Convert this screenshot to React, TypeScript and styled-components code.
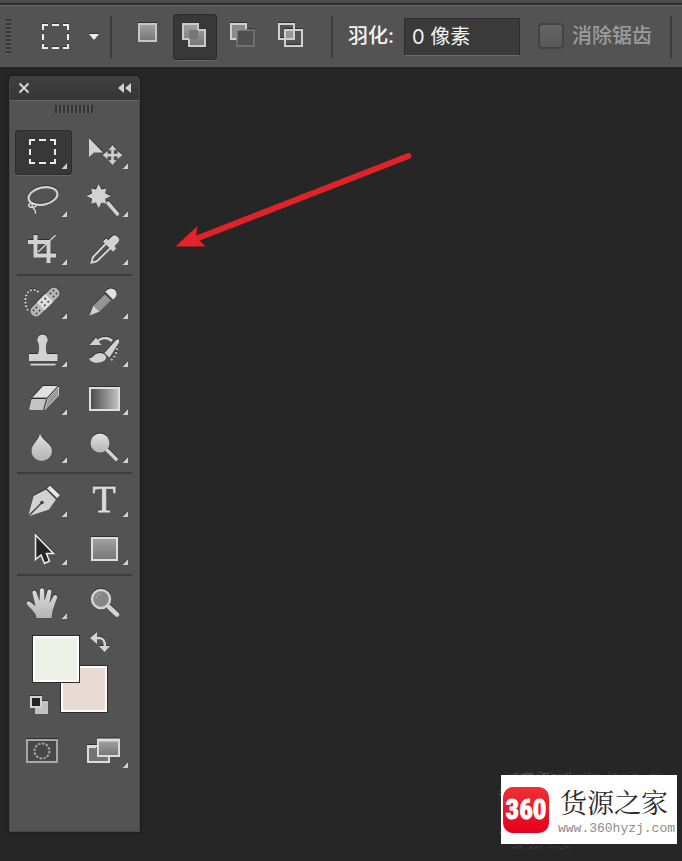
import React, { useState } from "react";
import styled, { createGlobalStyle, css } from "styled-components";

const GlobalStyle = createGlobalStyle`
  *, *::before, *::after { box-sizing: border-box; }
  body {
    margin: 0;
    background: #262626;
    color: #f0f0f0;
    font-family: Inter, "Noto Sans CJK SC", sans-serif;
  }
  button { border: 0; padding: 0; margin: 0; background: none; color: inherit; font: inherit; cursor: pointer; }
`;

const Page = styled.div`
  min-height: 100vh;
  display: flex;
  flex-direction: column;
  background: #262626;
  overflow: hidden;
`;

const TopEdge = styled.div`
  height: 5px;
  background: #4b4b4b;
  border-bottom: 2px solid #2d2d2d;
`;

const OptionsBar = styled.header`
  display: flex;
  align-items: center;
  height: 62px;
  padding-left: 6px;
  background: #535353;
  border-top: 1px solid #686868;
`;

const BarGrip = styled.div`
  width: 5px;
  height: 36px;
  background: repeating-linear-gradient(#363636 0 2px, #5a5a5a 2px 4px);
`;

const PresetButton = styled.button`
  display: flex;
  align-items: center;
  gap: 18px;
  height: 46px;
  margin-left: 30px;
  filter: drop-shadow(0 -1px 0 #333);
`;

const BarDivider = styled.div<{ $before: number; $after: number }>`
  flex: none;
  width: 2px;
  height: 42px;
  margin: 0 ${(p) => p.$after}px 0 ${(p) => p.$before}px;
  background: #3b3b3b;
`;

const pressed = css`
  background: #383838;
  box-shadow: inset 0 0 0 1px #2c2c2c, 0 1px 0 #666;
`;

const Modes = styled.div`
  display: flex;
  gap: 4px;
`;

const ModeButton = styled.button<{ $on: boolean }>`
  display: grid;
  place-items: center;
  width: 44px;
  height: 46px;
  border-radius: 4px;
  ${(p) => p.$on && pressed}
  svg { filter: drop-shadow(0 -1px 0 #303030); }
`;

const FieldLabel = styled.label`
  flex: none;
  margin-right: 10px;
  padding-bottom: 2px;
  font-size: 20px;
  font-weight: 500;
  line-height: 28px;
  color: #f4f4f4;
`;

const FeatherInput = styled.input`
  width: 116px;
  height: 38px;
  padding: 0 8px 2px 7px;
  border: 1px solid #2c2c2c;
  border-bottom-color: #6a6a6a;
  border-radius: 0;
  outline: 0;
  background: #3a3a3a;
  color: #f2f2f2;
  font: 20px Inter, "Noto Sans CJK SC", sans-serif;
`;

const CheckLabel = styled.label`
  display: flex;
  flex: none;
  align-items: center;
  gap: 8px;
  margin-left: 18px;
  padding-bottom: 2px;
  font-size: 20px;
  font-weight: 500;
  line-height: 28px;
  color: #9c9c9c;
`;

const CheckBox = styled.input`
  appearance: none;
  width: 26px;
  height: 26px;
  margin: 0;
  border: 2px solid #434343;
  border-radius: 4px;
  background: linear-gradient(#646464, #585858);
`;

const Workspace = styled.main`
  position: relative;
  flex: 1;
  display: flex;
  align-items: flex-start;
  padding: 9px;
`;

const ToolPanel = styled.aside`
  flex: none;
  width: 131px;
  padding-bottom: 56px;
  border: 1px solid #464646;
  border-top: 0;
  border-radius: 5px 5px 0 0;
  background: #535353;
  box-shadow: 0 0 3px 1px #1e1e1e;
`;

const PanelHeader = styled.div`
  display: flex;
  align-items: center;
  justify-content: space-between;
  height: 25px;
  padding: 0 7px 0 8px;
  border-bottom: 1px solid #656565;
  border-radius: 5px 5px 0 0;
  background: linear-gradient(#3f3f3f, #363636);
  button { display: grid; }
`;

const PanelGrip = styled.div`
  width: 38px;
  height: 8px;
  margin: 4px auto 15px 45px;
  background: repeating-linear-gradient(90deg, #333 0 2px, #5a5a5a 2px 4px);
`;

const ToolGrid = styled.div`
  display: grid;
  grid-template-columns: repeat(2, 61px);
  grid-auto-rows: 48px;
  padding-left: 3px;
  place-items: center;
`;

const ToolButton = styled.button<{ $on: boolean }>`
  display: grid;
  place-items: center;
  width: 57px;
  height: 45px;
  border-radius: 4px;
  ${(p) => p.$on && pressed}
  svg { filter: drop-shadow(0 -1px 0 #2e2e2e); }
`;

const PanelDivider = styled.hr`
  height: 2px;
  margin: 2px 7px;
  border: 0;
  background: #3d3d3d;
`;

const Swatches = styled.div`
  position: relative;
  height: 101px;
`;

const Swatch = styled.button<{ $x: number; $y: number; $fill: string }>`
  position: absolute;
  left: ${(p) => p.$x}px;
  top: ${(p) => p.$y}px;
  width: 48px;
  height: 48px;
  border: 1px solid #2c2c2c;
  background: ${(p) => p.$fill};
  box-shadow: inset 0 0 0 2px #fcfcfa;
`;

const SwatchAction = styled.button<{ $x: number; $y: number }>`
  position: absolute;
  left: ${(p) => p.$x}px;
  top: ${(p) => p.$y}px;
  display: grid;
  filter: drop-shadow(0 -1px 0 #333);
`;

const Pointer = styled.svg`
  position: absolute;
  left: 170px;
  top: 78px;
`;

const Brand = styled.div`
  position: absolute;
  right: 5px;
  bottom: 17px;
  display: flex;
  align-items: center;
  gap: 9px;
  width: 176px;
  height: 69px;
  padding-left: 2px;
  background: #fff;
`;

const Speckles = styled.svg`
  position: absolute;
  right: 0;
  bottom: 11px;
`;

const BrandMark = styled.div`
  flex: none;
  display: grid;
  place-items: center;
  width: 46px;
  height: 46px;
  border-radius: 10px;
  background: linear-gradient(#f03038, #e4001c);
  color: #fff;
  font: bold 27px/46px "Liberation Sans Narrow", "Roboto Condensed", sans-serif;
  -webkit-text-stroke: 1px #fff;
`;

const BrandText = styled.div`
  display: flex;
  flex-direction: column;
  white-space: nowrap;
`;

const BrandName = styled.span`
  padding-left: 2px;
  font: 27px/38px "KaiTi", "Noto Serif CJK SC", "Noto Sans CJK SC", serif;
  color: #2b2b2b;
`;

const BrandUrl = styled.a`
  font: 13px/15px "Liberation Mono", monospace;
  color: #8c8c8c;
  text-decoration: none;
`;

const Defs = styled.svg`
  display: block;
  width: 0;
  height: 0;
`;

const L = "#d2d2d2";

const Marquee = () => (
  <path
    d="M15 15V10H20M24 10H31M35 10H40V15M40 19V25M40 29V33H35M31 33H24M20 33H15V29M15 25V19"
    fill="none" stroke="#ececec" strokeWidth="2"
  />
);

const starPoints = Array.from({ length: 16 }, (_, i) => {
  const r = i % 2 ? 7 : i % 4 ? 10.5 : 12;
  const a = (i * Math.PI) / 8;
  return `${(22.7 + r * Math.sin(a)).toFixed(1)},${(18 - r * Math.cos(a)).toFixed(1)}`;
}).join(" ");

type Tool = { id: string; label: string; art: React.ReactNode; plain?: boolean };

const selectTools: Tool[] = [
  { id: "marquee", label: "矩形选框工具", art: <Marquee /> },
  {
    id: "move", label: "移动工具", art: (
      <>
        <path d="M13 8V27L18 22.500H27Z" fill={L} />
        <path d="M36.500 15.500l3.600 4.300h-2.500v4.100h4.100v-2.500l4.300 3.600-4.300 3.600v-2.500h-4.100v4.100h2.500l-3.600 4.300-3.600-4.300h2.500v-4.100h-4.100v2.500l-4.300-3.600 4.300-3.600v2.500h4.100v-4.100h-2.500z" fill={L} stroke={L} strokeWidth="0.600" />
      </>
    ),
  },
  {
    id: "lasso", label: "套索工具", art: (
      <g fill="none" stroke={L} strokeLinecap="round">
        <ellipse cx="28" cy="18" rx="14.600" ry="8.500" transform="rotate(-12 28 18)" strokeWidth="2.200" />
        <path d="M18 25c-4-1-5.500 3-3 4s6 0 6-1.500-4-2.500-4 0 4 3 3.500 7.500" strokeWidth="1.700" />
      </g>
    ),
  },
  {
    id: "wand", label: "魔棒工具", art: (
      <>
        <polygon points={starPoints} fill={L} />
        <path d="M32 25L41.500 36" stroke={L} strokeWidth="3.500" strokeLinecap="round" />
      </>
    ),
  },
  {
    id: "crop", label: "裁剪工具", art: (
      <g fill="none" stroke={L}>
        <path d="M20.500 9V29.500H41M13 16H33.500V37" strokeWidth="4" />
        <path d="M23 26L40.500 9" strokeWidth="1.500" />
      </g>
    ),
  },
  {
    id: "eyedropper", label: "吸管工具", art: (
      <>
        <path d="M30 17.500L17.500 30.500C16 32 16.500 34 15.500 36.500 18 36 20 36 21.500 34.500L34.500 22" fill="none" stroke={L} strokeWidth="2" />
        <path d="M27.500 15.500l2.500-2.500 2.500 1.500 3.500-3.500c3-3.500 9 1 5.800 5.300l-3.600 3.700 1.500 2.500-2.700 2.700z" fill={L} stroke={L} strokeLinejoin="round" />
      </>
    ),
  },
];

const paintTools: Tool[] = [
  {
    id: "heal", label: "污点修复画笔工具", art: (
      <>
        <path d="M12.500 29.500C9 23 9.500 11 17 10c4-.500 6 1 7 3" fill="none" stroke={L} strokeWidth="2.200" strokeDasharray="0 3.600" strokeLinecap="round" />
        <g transform="translate(30 22) rotate(-45)">
          <rect x="-18" y="-5.500" width="36" height="11" rx="5" fill="#b6b6b6" />
          <rect x="-6" y="-5.500" width="12" height="11" fill="#dedede" />
          <g fill="#454545">
            {[-14, -10, -2.5, 2.5, 10, 14].map((x) => (
              <React.Fragment key={x}>
                <circle cx={x} cy="-2.200" r="1" />
                <circle cx={x} cy="2.200" r="1" />
              </React.Fragment>
            ))}
          </g>
        </g>
      </>
    ),
  },
  {
    id: "pencil", label: "铅笔工具", art: (
      <g transform="translate(13.500 35.500) rotate(-45)">
        <path d="M0 0L10-4.500V4.500Z" fill={L} />
        <rect x="10" y="-4.500" width="16" height="9" fill="#8e8e8e" />
        <path d="M10-1.500H26M10 1.500H26" stroke="#a4a4a4" strokeWidth="1" />
        <path d="M28-5.500h2.500a5.500 5.500 0 0 1 0 11h-2.500z" fill="#e2e2e2" />
      </g>
    ),
  },
  {
    id: "stamp", label: "仿制图章工具", art: (
      <path d="M27.500 6.500a5 5 0 0 1 4.500 7.500c-1.500 3-1.500 8 0 12h10.500v7h-28.500v-7h9c1.500-4 1.500-9 0-12a5 5 0 0 1 4.500-7.500zM15.500 35.500h25v2h-25z" fill={L} />
    ),
  },
  {
    id: "history", label: "历史记录画笔工具", art: (
      <>
        <path d="M13.500 17L20 9.500 25.500 17Z" fill={L} />
        <path d="M21 14C25 9 32 9 36 13" fill="none" stroke={L} strokeWidth="2.500" />
        <path d="M28.500 25L40 12 43 11 43 14.500 33.500 29.500Z" fill={L} />
        <path d="M13 30c4 1 5-5 11-5 5 0 8 4 5 7-4 4-14 4-16-2z" fill={L} />
        <path d="M41 21c-.500 5-3 9-7 12" fill="none" stroke={L} strokeWidth="2.200" strokeDasharray="0 4" strokeLinecap="round" />
      </>
    ),
  },
  {
    id: "eraser", label: "橡皮擦工具", art: (
      <>
        <path d="M17.500 21.500L28 10H42.500L32 21.500Z" fill="#e0e0e0" />
        <path d="M16.500 23H31L28 34H16C14 34 14 33 14.500 31Z" fill="#c4c4c4" />
        <path d="M43.500 11V19.500L30 33.500 33 22.500Z" fill="#9a9a9a" stroke="#c8c8c8" strokeWidth="1" />
      </>
    ),
  },
  {
    id: "gradient", label: "渐变工具", art: (
      <rect x="14" y="12" width="29" height="22" fill="url(#ramp)" stroke="#dedede" strokeWidth="2" />
    ),
  },
  {
    id: "blur", label: "模糊工具", art: (
      <path d="M25 9C26 16 37 19 37 27A10.200 10 0 0 1 16.500 27C16.500 19 24 17 25 9Z" fill="url(#metal)" />
    ),
  },
  {
    id: "dodge", label: "减淡工具", art: (
      <>
        <path d="M31 26L40 35" stroke={L} strokeWidth="3.500" strokeLinecap="square" />
        <circle cx="24" cy="19" r="9.500" fill="url(#metal)" />
      </>
    ),
  },
];

const vectorTools: Tool[] = [
  {
    id: "pen", label: "钢笔工具", art: (
      <>
        <path d="M13 38.500L18.500 18 31 11.500 41 21.500 34 31.500Z" fill={L} />
        <path d="M13 38.500L26.500 25" stroke="#474747" strokeWidth="1.500" />
        <circle cx="27" cy="24.500" r="1.800" fill="#474747" />
        <path d="M33.500 9L43.500 18.500" stroke="#e6e6e6" strokeWidth="4" />
      </>
    ),
  },
  {
    id: "type", label: "横排文字工具", art: (
      <text x="28" y="34" textAnchor="middle" fontFamily="Liberation Serif, serif" fontSize="38" fill="#dadada" stroke="#dadada" strokeWidth="0.800">T</text>
    ),
  },
  {
    id: "path", label: "路径选择工具", art: (
      <path d="M20.500 9V33.500L26 29 29.500 37.500 34.500 35 31.500 27.500H38.500Z" fill="#252525" stroke="#ececec" strokeWidth="1.600" />
    ),
  },
  {
    id: "shape", label: "矩形工具", art: (
      <rect x="16" y="12" width="25" height="22" fill="url(#fade)" stroke="#dedede" strokeWidth="2" />
    ),
  },
];

const viewTools: Tool[] = [
  {
    id: "hand", label: "抓手工具", art: (
      <path
        d="M21.500 38C21 33 18 31 12.500 25C10.500 22 13 20 15.500 22L20.500 26L17.500 13C17 10 20.500 9.500 21.300 12L24.500 21L25 10C25.200 7.500 28.800 7.500 29 10L29.500 21L32.500 11C33.500 8.500 36.800 9.500 36.200 12L34.500 23L38.500 16C40 14 43 15.500 42 18C39.500 24 38.500 28 37.500 31L36.500 38Z"
        fill="url(#metal)"
      />
    ),
  },
  {
    id: "zoom", label: "缩放工具", plain: true, art: (
      <>
        <path d="M33 27L41 34.500" stroke={L} strokeWidth="4.500" strokeLinecap="round" />
        <circle cx="25" cy="19" r="9" fill="#858585" stroke={L} strokeWidth="2.500" />
        <path d="M20 19a5 5 0 0 1 5-5" fill="none" stroke="#9a9a9a" strokeWidth="2" />
      </>
    ),
  },
];

const screenTools: Tool[] = [
  {
    id: "mask", label: "以快速蒙版模式编辑", plain: true, art: (
      <g fill="none" stroke="#a6a6a6">
        <rect x="12" y="11" width="30" height="22" fill="#484848" strokeWidth="2" />
        <circle cx="27" cy="22" r="7.500" strokeWidth="2" strokeDasharray="2.500 1.400" />
      </g>
    ),
  },
  {
    id: "screen", label: "更改屏幕模式", art: (
      <g stroke="#dcdcdc" strokeWidth="2">
        <rect x="12" y="17" width="21" height="16" fill="#747474" />
        <path d="M12 17.500H20" strokeWidth="3" />
        <rect x="22" y="11" width="21" height="16" fill="url(#fade)" />
        <path d="M21 11H44" strokeWidth="3" />
      </g>
    ),
  },
];

const modeList = [
  { id: "new", label: "新选区", art: <rect x="7" y="2" width="17" height="17" fill="url(#fade)" stroke="#c6c6c6" strokeWidth="2" /> },
  {
    id: "add", label: "添加到选区", art: (
      <>
        <path d="M3 2H18V8H25V24H9V17H3Z" fill="url(#fade)" stroke="#cacaca" strokeWidth="2" />
        <rect x="9" y="8" width="9" height="9" fill="#777" />
      </>
    ),
  },
  {
    id: "subtract", label: "从选区减去", art: (
      <>
        <path d="M3 2H18V8H9V17H3Z" fill="#8a8a8a" stroke="#d0d0d0" strokeWidth="2" />
        <rect x="9" y="8" width="17" height="16" fill="#505050" stroke="#7c7c7c" strokeWidth="1.500" />
      </>
    ),
  },
  {
    id: "intersect", label: "与选区交叉", art: (
      <g stroke="#cfcfcf" strokeWidth="2" fill="none">
        <rect x="9" y="8" width="9" height="9" fill="#969696" stroke="none" />
        <rect x="3" y="2" width="15" height="15" />
        <rect x="9" y="8" width="17" height="16" />
      </g>
    ),
  },
];

// Fixed-seed scatter, denser toward the upper-left of the brand plate.
let seed = 11;
const rnd = () => ((seed = (seed * 16807) % 2147483647) / 2147483647);
const specks = Array.from({ length: 520 }, (_, i) => {
  if (i < 180) return { x: 15 + rnd() * 48, y: 14 - rnd() * rnd() * 9, o: 0.15 + rnd() * 0.35 };
  if (i < 380) return { x: 20 + rnd() * 150, y: 14 - rnd() * 7, o: 0.08 + rnd() * 0.2 };
  if (i < 460) return { x: 10 - rnd() * rnd() * 6, y: 20 + rnd() * 48, o: 0.1 + rnd() * 0.3 };
  return { x: 14 + rnd() * 60, y: 80 + rnd() * 3, o: 0.05 + rnd() * 0.08 };
});

function ToolSet({ tools, active, onPick }: { tools: Tool[]; active: string; onPick: (id: string) => void }) {
  return (
    <ToolGrid>
      {tools.map((t) => (
        <ToolButton key={t.id} type="button" aria-label={t.label} aria-pressed={t.id === active} $on={t.id === active} onClick={() => onPick(t.id)}>
          <svg width="57" height="44" viewBox="0 0 57 44" aria-hidden="true">
            {t.art}
            {!t.plain && <path d="M52 33V39H46.500Z" fill="#cfcfcf" />}
          </svg>
        </ToolButton>
      ))}
    </ToolGrid>
  );
}

export default function App() {
  const [tool, setTool] = useState("marquee");
  const [mode, setMode] = useState("add");
  const [feather, setFeather] = useState("0 像素");

  return (
    <Page>
      <GlobalStyle />
      <Defs aria-hidden="true">
        <defs>
          <linearGradient id="fade" x1="0" y1="0" x2="0" y2="1"><stop stopColor="#a2a2a2" /><stop offset="1" stopColor="#767676" /></linearGradient>
          <linearGradient id="metal" x1="0" y1="0" x2="0" y2="1"><stop stopColor="#e0e0e0" /><stop offset="1" stopColor="#b4b4b4" /></linearGradient>
          <linearGradient id="ramp"><stop stopColor="#484848" /><stop offset="1" stopColor="#c4c4c4" /></linearGradient>
        </defs>
      </Defs>
      <TopEdge />
      <OptionsBar>
        <BarGrip />
        <PresetButton type="button" aria-label="工具预设">
          <svg width="30" height="28" viewBox="13 8 30 28" aria-hidden="true"><Marquee /></svg>
          <svg width="10" height="6" viewBox="0 0 10 6" aria-hidden="true"><path d="M0 0H10L5 6Z" fill="#f0f0f0" /></svg>
        </PresetButton>
        <BarDivider $before={11} $after={13} />
        <Modes>
          {modeList.map((m) => (
            <ModeButton key={m.id} type="button" aria-label={m.label} aria-pressed={m.id === mode} $on={m.id === mode} onClick={() => setMode(m.id)}>
              <svg width="30" height="30" viewBox="0 0 30 30" aria-hidden="true">{m.art}</svg>
            </ModeButton>
          ))}
        </Modes>
        <BarDivider $before={18} $after={15} />
        <FieldLabel htmlFor="feather">羽化:</FieldLabel>
        <FeatherInput id="feather" value={feather} onChange={(e) => setFeather(e.target.value)} />
        <CheckLabel>
          <CheckBox type="checkbox" disabled />
          消除锯齿
        </CheckLabel>
        <BarDivider $before={18} $after={0} />
      </OptionsBar>

      <Workspace>
        <ToolPanel>
          <PanelHeader>
            <button type="button" aria-label="关闭">
              <svg width="13" height="12" viewBox="0 0 13 12"><path d="M1.500 1.500L10.500 10.500M10.500 1.500L1.500 10.500" stroke="#d4d4d4" strokeWidth="2" /></svg>
            </button>
            <button type="button" aria-label="折叠">
              <svg width="14" height="10" viewBox="0 0 14 10"><path d="M6 0V10L0 5ZM13 0V10L7 5Z" fill="#d0d0d0" /></svg>
            </button>
          </PanelHeader>
          <PanelGrip />
          <ToolSet tools={selectTools} active={tool} onPick={setTool} />
          <PanelDivider />
          <ToolSet tools={paintTools} active={tool} onPick={setTool} />
          <PanelDivider />
          <ToolSet tools={vectorTools} active={tool} onPick={setTool} />
          <PanelDivider />
          <ToolSet tools={viewTools} active={tool} onPick={setTool} />
          <Swatches>
            <Swatch type="button" aria-label="背景色" $x={50} $y={39} $fill="#e9dbd4" />
            <Swatch type="button" aria-label="前景色" $x={22} $y={9} $fill="#eef1e7" />
            <SwatchAction type="button" aria-label="切换前景色和背景色" $x={80} $y={6}>
              <svg width="21" height="21" viewBox="0 0 21 21">
                <path d="M5 6H9C13 6 15 8 15 15" fill="none" stroke={L} strokeWidth="2.500" />
                <path d="M0 6L7 0V12ZM9 14H20L14.500 20Z" fill={L} />
              </svg>
            </SwatchAction>
            <SwatchAction type="button" aria-label="默认前景色和背景色" $x={19} $y={69}>
              <svg width="20" height="20" viewBox="0 0 20 20">
                <rect x="6" y="6" width="13" height="13" fill="#c2c2c2" />
                <rect x="2" y="2" width="10" height="10" fill="#242424" stroke="#d2d2d2" strokeWidth="2" />
              </svg>
            </SwatchAction>
          </Swatches>
          <ToolSet tools={screenTools} active={tool} onPick={setTool} />
        </ToolPanel>

        <Pointer width="250" height="110" viewBox="0 0 250 110" aria-hidden="true">
          <path d="M238.500 11L28 93" stroke="#df2329" strokeWidth="6" strokeLinecap="round" />
          <path d="M5.500 101.500L27.500 81 26 92 35.500 101.500Z" fill="#e9222a" />
        </Pointer>

        <Speckles width="187" height="84" viewBox="0 0 187 84" aria-hidden="true">
          {specks.map((s, i) => (
            <circle key={i} cx={s.x.toFixed(1)} cy={s.y.toFixed(1)} r="0.700" fill="#d8d8d8" opacity={s.o.toFixed(2)} />
          ))}
        </Speckles>
        <Brand>
          <BrandMark>360</BrandMark>
          <BrandText>
            <BrandName>货源之家</BrandName>
            <BrandUrl href="#">www.360hyzj.com</BrandUrl>
          </BrandText>
        </Brand>
      </Workspace>
    </Page>
  );
}
